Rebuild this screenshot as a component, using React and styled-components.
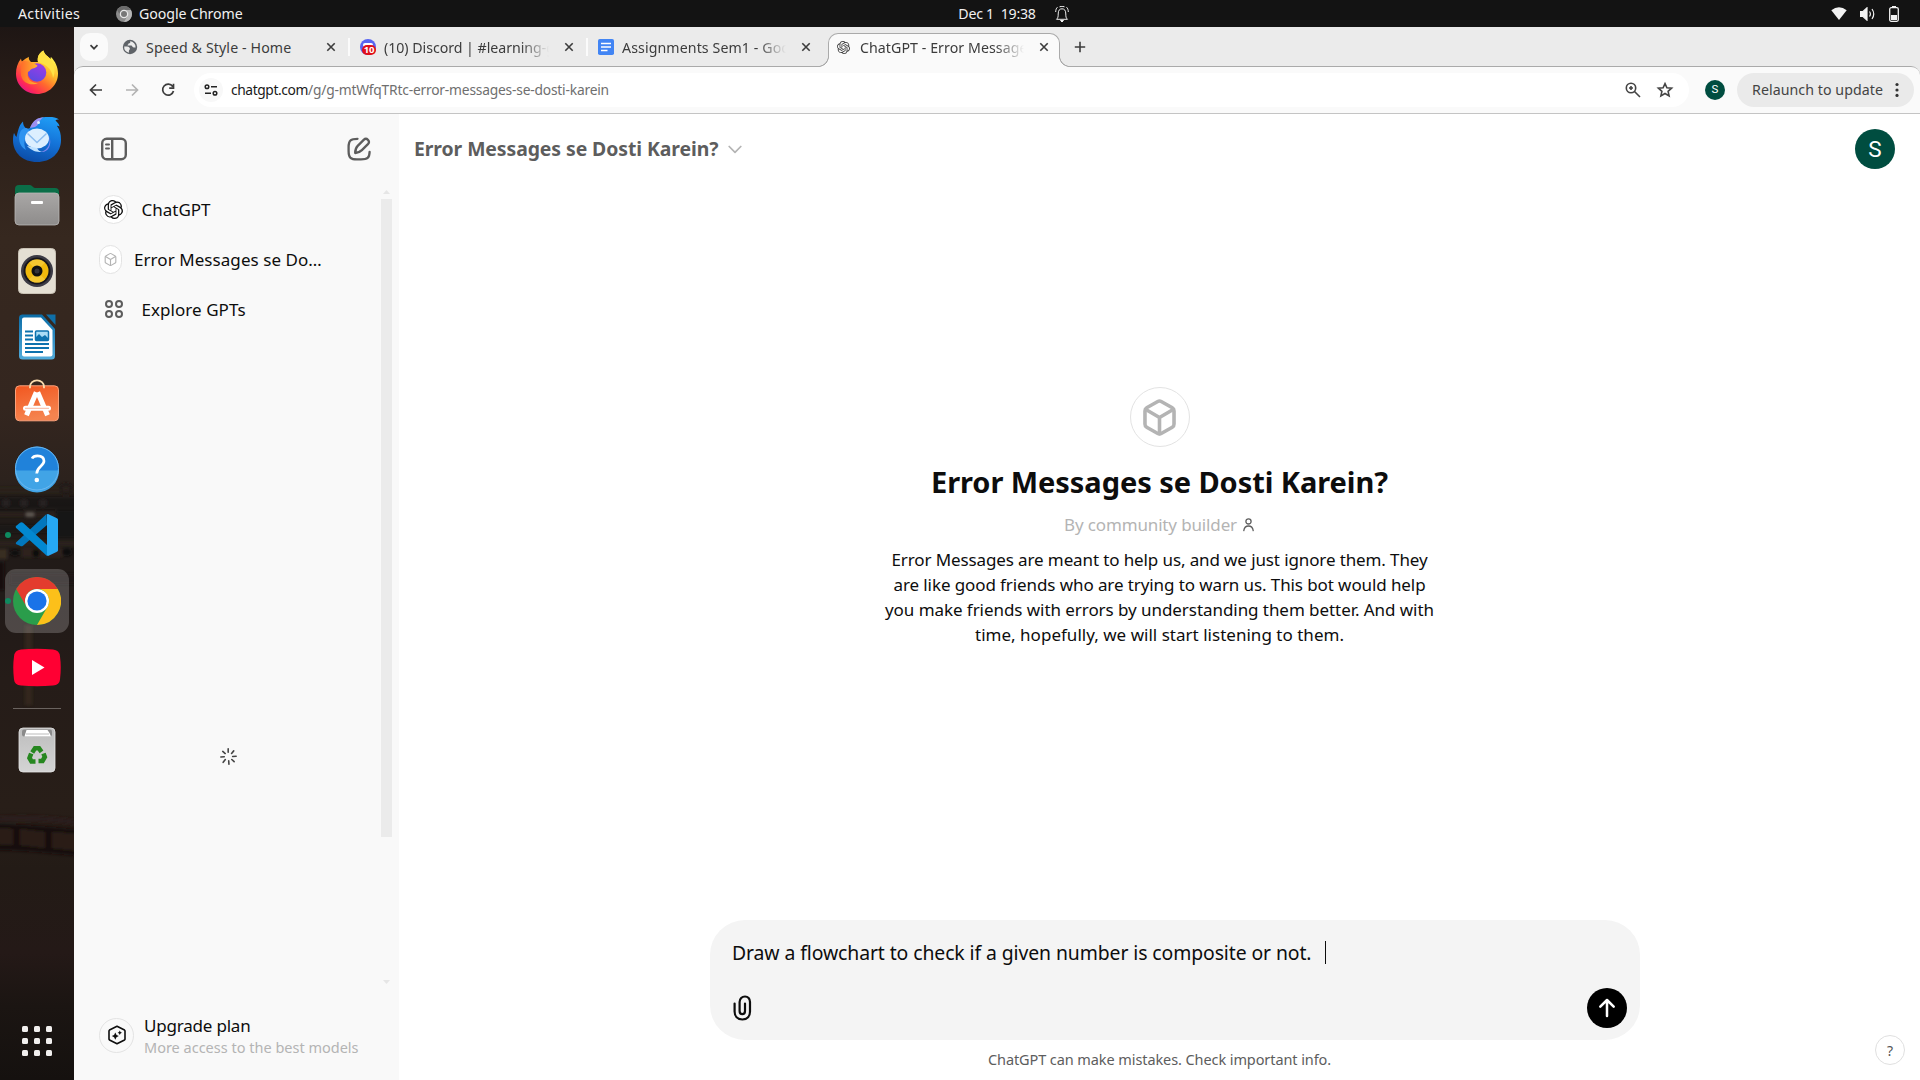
import React from "react";
import styled, { createGlobalStyle, css } from "styled-components";
import { SiOpenai } from "react-icons/si";

const GlobalStyle = createGlobalStyle`
  *, *::before, *::after { box-sizing: border-box; }
  body {
    margin: 0;
    overflow: hidden;
    font-family: "Noto Sans", "Open Sans", sans-serif;
    background: #fff;
  }
  svg { display: block; flex: none; }
  button { border: 0; padding: 0; margin: 0; background: none; font: inherit; color: inherit; }
  h1, h2, p { margin: 0; }
`;

/* ---------- desktop shell ---------- */

const Desktop = styled.div`
  width: 1920px;
  height: 1080px;
  display: flex;
  flex-direction: column;
  overflow: hidden;
`;

const TopBar = styled.header`
  flex: none;
  height: 27px;
  display: grid;
  grid-template-columns: 1fr auto 1fr;
  background: #131313;
  color: #f0f0f0;
  font-size: 14.2px;
  line-height: 27px;
  white-space: nowrap;
`;

const TopGroup = styled.div`
  display: flex;
  align-items: center;
  justify-content: ${(p) => (p.$end ? "flex-end" : "flex-start")};
  padding: ${(p) => p.$pad || "0"};
  gap: ${(p) => p.$gap || 0}px;
`;

const Spaced = styled.span`
  letter-spacing: ${(p) => p.$track || 0}px;
  white-space: pre;
`;

const Body = styled.div`
  flex: 1;
  min-height: 0;
  display: flex;
`;

/* ---------- dock ---------- */

const DockBar = styled.nav`
  position: relative;
  flex: none;
  width: 74px;
  padding-top: 13px;
  display: flex;
  flex-direction: column;
  align-items: center;
  background: #261d18;
`;

const Wallpaper = styled.svg`
  position: absolute;
  inset: 0;
`;

const DockSlot = styled.div`
  position: relative;
  flex: none;
  width: 64px;
  height: 64px;
  margin: 1px 0;
  display: flex;
  align-items: center;
  justify-content: center;
  border-radius: 11px;
  background: ${(p) => (p.$active ? "rgba(255,255,255,0.2)" : "transparent")};
  ${(p) =>
    p.$running &&
    css`
      &::before {
        content: "";
        position: absolute;
        left: 0;
        top: 29px;
        width: 6px;
        height: 6px;
        border-radius: 50%;
        background: #0e8a5f;
      }
    `}
`;

const DockDivider = styled.div`
  position: relative;
  width: 48px;
  height: 1px;
  margin: 8px 0;
  background: #6a635f;
`;

const AppsGrid = styled.div`
  position: relative;
  margin: auto 0 24px;
  display: grid;
  grid-template-columns: repeat(3, 6px);
  gap: 6px;
`;

const AppsDot = styled.i`
  height: 6px;
  border-radius: 1.5px;
  background: #f1efee;
`;

/* ---------- browser ---------- */

const Browser = styled.div`
  flex: 1;
  min-width: 0;
  display: flex;
  flex-direction: column;
  background: #ebebeb;
`;

const TabStrip = styled.div`
  flex: none;
  height: 39px;
  padding: 6px 0 0 6px;
  display: flex;
  align-items: flex-start;
  color: #3c3c3c;
`;

const TabSearch = styled.button`
  width: 28px;
  height: 28px;
  border-radius: 10px;
  display: grid;
  place-items: center;
  background: #fafafa;
`;

const Tab = styled.div`
  position: relative;
  height: ${(p) => (p.$active ? 34 : 28)}px;
  width: ${(p) => p.$width}px;
  padding: ${(p) => (p.$active ? "0 9px 7px 5px" : p.$divider ? "0 11px 0 0" : "0 13px 0 0")};
  margin-left: ${(p) => p.$before}px;
  display: flex;
  align-items: center;
  gap: 8px;
  font-size: 14.2px;
  ${(p) =>
    p.$active
      ? css`
          background: #fafafa;
          border: 1px solid #aaa;
          border-bottom: 0;
          border-radius: 10px 10px 0 0;
          z-index: 1;
          &::before,
          &::after {
            content: "";
            position: absolute;
            bottom: 0;
            width: 11px;
            height: 11px;
          }
          &::before {
            left: -11px;
            background: radial-gradient(circle at 0 0, #ebebeb 9.6px, #aaa 10.2px, #aaa 10.7px, #fafafa 11.3px);
          }
          &::after {
            right: -11px;
            background: radial-gradient(circle at 100% 0, #ebebeb 9.6px, #aaa 10.2px, #aaa 10.7px, #fafafa 11.3px);
          }
        `
      : ""}
  ${(p) =>
    p.$divider &&
    css`
      border-right: 2px solid #fbfbfb;
      border-image: linear-gradient(transparent 6px, #fbfbfb 6px, #fbfbfb 22px, transparent 22px) 1;
    `}
`;

const TabTitle = styled.span`
  flex: 1;
  min-width: 0;
  overflow: hidden;
  white-space: nowrap;
  line-height: 27px;
  letter-spacing: ${(p) => p.$track}px;
  ${(p) =>
    p.$fade &&
    css`
      mask-image: linear-gradient(to right, #000 calc(100% - 34px), transparent calc(100% - 6px));
    `}
`;

const NewTab = styled.button`
  width: 28px;
  height: 28px;
  margin-left: 6px;
  display: grid;
  place-items: center;
`;

const Toolbar = styled.div`
  flex: none;
  height: 48px;
  padding: 6px 6px 6px 8px;
  display: flex;
  align-items: center;
  background: #fafafa;
  border-top: 1px solid #aaa;
  border-bottom: 1px solid #c4c4c4;
  border-radius: 9px 9px 0 0;
`;

const NavButton = styled.button`
  width: 28px;
  height: 28px;
  margin-right: 8px;
  display: grid;
  place-items: center;
  color: ${(p) => (p.$muted ? "#b3b3b3" : "#3c3c3c")};
`;

const AddressBar = styled.div`
  flex: none;
  width: 1495px;
  height: 34px;
  margin-left: 4px;
  padding: 0 14px 0 5px;
  display: flex;
  align-items: center;
  border-radius: 17px;
  background: #fff;
`;

const SiteInfo = styled.span`
  width: 24px;
  height: 24px;
  border-radius: 50%;
  display: grid;
  place-items: center;
  background: #f8f8f8;
`;

const Url = styled.span`
  flex: 1;
  margin-left: 8px;
  font-size: 13.8px;
  line-height: 32px;
  color: #6f6f6f;
  letter-spacing: -0.2px;
  white-space: nowrap;
`;

const Domain = styled.span`
  color: #1a1a1a;
  letter-spacing: -0.4px;
`;

const AddressActions = styled.span`
  display: flex;
  gap: 12px;
`;

const Avatar = styled.span`
  flex: none;
  width: ${(p) => p.$size}px;
  height: ${(p) => p.$size}px;
  border-radius: 50%;
  display: grid;
  place-items: center;
  background: #004d40;
  color: #fff;
  font-family: Roboto, sans-serif;
  font-size: ${(p) => p.$font}px;
  line-height: 1;
`;

const Relaunch = styled.button`
  flex: none;
  width: 177px;
  height: 34px;
  margin-left: 12px;
  padding: 0 14px 2px 15px;
  display: flex;
  align-items: center;
  justify-content: space-between;
  border-radius: 17px;
  background: #eaeaea;
  color: #444;
  font-size: 14.2px;
  letter-spacing: 0.06px;
`;

/* ---------- page ---------- */

const Page = styled.div`
  flex: 1;
  min-height: 0;
  display: flex;
  background: #fff;
  color: #0d0d0d;
`;

const Sidebar = styled.aside`
  flex: none;
  width: 325px;
  display: flex;
  flex-direction: column;
  background: #f9f9f9;
`;

const SidebarHead = styled.div`
  flex: none;
  height: 70px;
  padding: 0 28px 0 26px;
  display: flex;
  align-items: center;
  justify-content: space-between;
  color: #5d5d5d;
`;

const SidebarScroll = styled.div`
  height: 802px;
  display: flex;
`;

const NavList = styled.div`
  flex: 1;
  padding: 0 0 0 25px;
  display: flex;
  flex-direction: column;
`;

const NavRow = styled.div`
  height: 50px;
  display: flex;
  align-items: center;
  gap: ${(p) => p.$gap || 13.5}px;
  font-size: 17px;
  white-space: nowrap;
`;

const NavLabel = styled.span`
  letter-spacing: ${(p) => p.$track || 0}px;
`;

const IconDisc = styled.span`
  flex: none;
  width: ${(p) => p.$w}px;
  height: ${(p) => p.$h}px;
  display: grid;
  place-items: center;
  border-radius: 50px;
  border: ${(p) => (p.$bare ? "0" : "1px solid #e3e3e3")};
  background: ${(p) => (p.$bare || p.$clear ? "transparent" : "#fff")};
  color: ${(p) => p.$color || "#0d0d0d"};
`;

const Loading = styled.div`
  margin: 414px 0 0 121px;
`;

const ScrollTrack = styled.div`
  width: 11px;
  margin-right: 7px;
  padding: 6px 0 2px;
  display: flex;
  flex-direction: column;
  align-items: center;
`;

const ScrollThumb = styled.div`
  width: 11px;
  height: 638px;
  margin: 5px 0 auto;
  background: #ebebeb;
`;

const Upgrade = styled.div`
  margin-top: 24px;
  padding-left: 25px;
  height: 50px;
  display: flex;
  align-items: center;
  gap: 10px;
`;

const UpgradeText = styled.div`
  display: flex;
  flex-direction: column;
  white-space: nowrap;
`;

const UpgradeTitle = styled.span`
  font-size: 17px;
  line-height: 24px;
  letter-spacing: -0.2px;
`;

const UpgradeNote = styled.span`
  font-size: 14.5px;
  line-height: 19px;
  color: #b4b4b4;
`;

const Main = styled.main`
  flex: 1;
  min-width: 0;
  display: flex;
  flex-direction: column;
`;

const ChatHeader = styled.div`
  flex: none;
  height: 70px;
  padding: 0 25px 0 15px;
  display: flex;
  align-items: center;
  justify-content: space-between;
`;

const ModelName = styled.h2`
  display: flex;
  align-items: center;
  gap: 10px;
  padding-bottom: 2px;
  font-size: 19.4px;
  font-weight: 700;
  letter-spacing: -0.08px;
  color: #5d5d5d;
`;

const Chevron = styled.svg`
  margin-top: 3px;
`;

const Hero = styled.section`
  flex: 1;
  padding-top: 203px;
  display: flex;
  flex-direction: column;
  align-items: center;
`;

const HeroTitle = styled.h1`
  margin-top: 15px;
  font-size: 29px;
  line-height: 40px;
  font-weight: 700;
  letter-spacing: -0.06px;
`;

const Byline = styled.div`
  margin-top: 10px;
  height: 25px;
  display: flex;
  align-items: center;
  gap: 5px;
  font-size: 17px;
  letter-spacing: -0.14px;
  color: #b4b4b4;
`;

const Blurb = styled.p`
  margin-top: 10px;
  width: 560px;
  text-align: center;
  font-size: 17px;
  line-height: 25px;
`;

const BlurbLine = styled.span`
  display: block;
  white-space: nowrap;
  letter-spacing: ${(p) => p.$track}px;
`;

const Composer = styled.div`
  flex: none;
  width: 930px;
  height: 120px;
  margin-left: 311px;
  padding: 16px 13px 12px 22px;
  display: flex;
  flex-direction: column;
  justify-content: space-between;
  border-radius: 35px;
  background: #f4f4f4;
`;

const Prompt = styled.div`
  display: flex;
  align-items: center;
  gap: 13.5px;
  height: 32px;
  font-size: 19.4px;
  letter-spacing: -0.095px;
`;

const Caret = styled.i`
  width: 1px;
  height: 23px;
  background: #0d0d0d;
`;

const ComposerActions = styled.div`
  display: flex;
  align-items: center;
  justify-content: space-between;
  padding-left: 1px;
`;

const SendButton = styled.button`
  width: 40px;
  height: 40px;
  border-radius: 50%;
  display: grid;
  place-items: center;
  background: #000;
`;

const Footer = styled.footer`
  flex: none;
  height: 40px;
  padding: 0 15px 2px 0;
  display: grid;
  grid-template-columns: 45px 1fr 30px;
  align-items: center;
`;

const Disclaimer = styled.span`
  grid-column: 2;
  text-align: center;
  font-size: 14.5px;
  letter-spacing: -0.09px;
  color: #5d5d5d;
`;

const HelpButton = styled.button`
  align-self: start;
  margin-top: -5px;
  width: 30px;
  height: 30px;
  border: 1px solid #e0e0e0;
  border-radius: 50%;
  background: #fff;
  color: #555;
  font-size: 14px;
`;

/* ---------- dock artwork ---------- */

const DockWallpaper = () => (
  <Wallpaper width="74" height="1053" viewBox="0 27 74 1053">
    <defs>
      <linearGradient id="wall" x1="0" y1="27" x2="0" y2="1080" gradientUnits="userSpaceOnUse">
        <stop offset="0" stopColor="#1e1614" />
        <stop offset="0.05" stopColor="#281c17" />
        <stop offset="0.2" stopColor="#36281f" />
        <stop offset="0.36" stopColor="#34261f" />
        <stop offset="0.43" stopColor="#2c221d" />
        <stop offset="0.455" stopColor="#211b18" />
        <stop offset="0.55" stopColor="#211a18" />
        <stop offset="0.62" stopColor="#251c18" />
        <stop offset="0.74" stopColor="#281e18" />
        <stop offset="0.8" stopColor="#231b16" />
        <stop offset="0.88" stopColor="#241917" />
        <stop offset="0.93" stopColor="#1b1512" />
        <stop offset="1" stopColor="#15110f" />
      </linearGradient>
      <filter id="soft" x="-20%" y="-20%" width="140%" height="140%">
        <feGaussianBlur stdDeviation="1.5" />
      </filter>
    </defs>
    <rect y="27" width="74" height="1053" fill="url(#wall)" />
    <g filter="url(#soft)">
      <rect x="-5" y="488" width="84" height="4" fill="#2b201b" />
      <rect x="-5" y="497" width="84" height="12" fill="#131112" opacity="0.6" />
      <circle cx="66" cy="489" r="5" fill="none" stroke="#1b1513" strokeWidth="2" />
      <circle cx="6" cy="503" r="4" fill="#282020" />
      <circle cx="24" cy="503" r="4" fill="#282020" />
      <circle cx="43" cy="503" r="4" fill="#282020" />
      <rect x="-5" y="513" width="60" height="3" fill="#2e231e" />
      <rect x="56" y="510" width="22" height="28" fill="#161413" />
      <rect x="26" y="512" width="8" height="5" fill="#5d5751" />
      <rect x="-5" y="525" width="60" height="8" fill="#141112" opacity="0.5" />
      <rect x="-5" y="541" width="84" height="5" fill="#2b201c" />
      <rect x="-5" y="549" width="12" height="10" fill="#382d20" />
      <rect x="22" y="548" width="40" height="9" fill="#2e241e" />
      <ellipse cx="15" cy="553" rx="5" ry="3" fill="#110e0e" />
      <ellipse cx="36" cy="553" rx="4" ry="4" fill="#110e0e" />
      <ellipse cx="67" cy="552" rx="5" ry="4" fill="#110e0e" />
      <rect x="-5" y="562" width="9" height="28" fill="#121011" />
      <rect x="10" y="574" width="70" height="10" fill="#1a1415" />
      <rect x="25" y="625" width="7" height="80" fill="#443421" opacity="0.45" />
      <path d="M-4 819 C25 817 50 818 80 823" stroke="#2b1f1d" strokeWidth="5" fill="none" />
      <path d="M-4 837 C25 837 50 840 80 843" stroke="#151010" strokeWidth="26" fill="none" />
      <path d="M-4 828 L13 829 L13 845 L-4 844Z M20 829 L45 832 L45 848 L20 845Z M52 832 L80 834 L80 851 L52 848Z" fill="#291f19" />
    </g>
  </Wallpaper>
);

const Firefox = () => (
  <svg width="48" height="48" viewBox="0 0 48 48">
    <defs>
      <linearGradient id="ff1" x1="0.85" y1="0.1" x2="0.2" y2="0.95">
        <stop offset="0.05" stopColor="#fff44f" />
        <stop offset="0.35" stopColor="#ffb62a" />
        <stop offset="0.6" stopColor="#ff6a2e" />
        <stop offset="0.85" stopColor="#ff2a55" />
        <stop offset="1" stopColor="#e31587" />
      </linearGradient>
      <linearGradient id="ff2" x1="0.8" y1="0" x2="0.3" y2="1">
        <stop offset="0" stopColor="#a03be8" />
        <stop offset="1" stopColor="#5b4ae0" />
      </linearGradient>
      <linearGradient id="ff3" x1="0" y1="0" x2="1" y2="0">
        <stop offset="0" stopColor="#ff6a2a" />
        <stop offset="1" stopColor="#ffb82e" />
      </linearGradient>
    </defs>
    <path d="M30.4 1.5c1 4 4.2 5.5 7.2 8.700C37.500 9 37.700 8.500 38 8c4.500 4.500 7 10.500 7 16.500C45 36 35.800 45 24 45S3 36 3 24.800C3 19 4.500 14 8 9.500c.2 1.500.5 2.300 1 3C12 10 14 9 15.700 7.800c0 3 1 4 2.300 5.200h7c-1-5 1-9 5.400-11.500z" fill="url(#ff1)" />
    <path d="M25 13c-1-5 1-9 5.400-11.500 1 4 4.200 5.500 7.200 8.700C43 17 42 25 40 29c-1-9-6-13-15-16z" fill="#ffe245" />
    <circle cx="24" cy="23.500" r="9.300" fill="url(#ff2)" />
    <path d="M9 12.500c4-1 8 0 9.500 1.500 2.500.5 4.500 1.200 6 2.700-1 2.300-4.500 2.300-6 3.300-1.500 1-2 2.500-3.500 2.800-2 6 3 12 10 11.200-6 3-15 1-17-7.500-.6-5-.5-10 1-14z" fill="url(#ff3)" />
  </svg>
);

const Thunderbird = () => (
  <svg width="48" height="48" viewBox="0 -1 48 48">
    <defs>
      <linearGradient id="tb" x1="0.7" y1="0" x2="0.4" y2="1">
        <stop offset="0" stopColor="#1f9cf5" />
        <stop offset="0.5" stopColor="#1473d8" />
        <stop offset="1" stopColor="#0c4da8" />
      </linearGradient>
    </defs>
    <path d="M17 12C20 4 27 .5 34 1c4-.3 9 0 12 2.500-2 0-3 .3-3.500 1C45 7 46 8 46.500 10.500 45 9.500 44.500 9.500 44 10c3 4 4 8 4 14 0 13-10 22-24 22S0 37 0 24c0-3 .3-5 1-7 1 2 1.500 3 2.500 4C5 15 6 9 10 5.500 10 9 11 11 14 13z" fill="url(#tb)" />
    <path d="M17 12C20 4 25 1.500 31 1.300 25 4 27 9 22 11z" fill="#9d8ff0" />
    <path d="M6 22c0-5 2-9 6-10 3 0 5 2 5 5-6 4-7 10-4 17-4-2-7-7-7-12z" fill="#2d93f0" />
    <path d="M36 19c2 9-1 15-8 17 6 1 12-6 8-17z" fill="#7f86ee" />
    <ellipse cx="24" cy="22.500" rx="12" ry="10" fill="#dcefff" />
    <path d="M14 30c5 5 9 6 15 6-3-1-4-2-5-4z" fill="#bfe2ff" />
    <path d="M14.500 17.500 24 26.500l9.500-9" fill="none" stroke="#8cbdf0" strokeWidth="1.500" />
    <circle cx="25.500" cy="6.500" r="1.500" fill="#d8ecff" />
  </svg>
);

const Files = () => (
  <svg width="48" height="48" viewBox="0 0 48 48">
    <defs>
      <linearGradient id="fl" x1="0" y1="0" x2="0" y2="1">
        <stop offset="0" stopColor="#a9a7a6" />
        <stop offset="1" stopColor="#8e8c8b" />
      </linearGradient>
    </defs>
    <path d="M2 8a4 4 0 0 1 4-4h11c2 0 3 3 5 3h20a4 4 0 0 1 4 4v12H2z" fill="#0b6e48" />
    <rect x="2" y="12" width="44" height="32" rx="4" fill="url(#fl)" stroke="#b9b7b6" strokeWidth="0.800" />
    <rect x="18" y="20" width="12" height="3" rx="1" fill="#fff" />
  </svg>
);

const Rhythmbox = () => (
  <svg width="48" height="48" viewBox="0 0 48 48">
    <rect x="5.500" y="1.500" width="37" height="45" rx="4" fill="#e4dfd3" stroke="#c9c2b5" />
    <circle cx="24" cy="24" r="16" fill="#3c3b45" />
    <circle cx="24" cy="24" r="13.500" fill="#17161c" />
    <circle cx="24" cy="24" r="11.500" fill="#f0b90c" />
    <path d="M24 24 16 15.500a11.500 11.500 0 0 1 16 0zM24 24l8 8.500a11.500 11.500 0 0 1-16 0z" fill="#f9d04a" opacity="0.600" />
    <circle cx="24" cy="24" r="5.500" fill="#111" />
    <circle cx="24" cy="24" r="2.500" fill="#33323a" />
  </svg>
);

const Writer = () => (
  <svg width="48" height="48" viewBox="0 0 48 48">
    <defs>
      <linearGradient id="wr" x1="0" y1="0" x2="0" y2="1">
        <stop offset="0" stopColor="#0b6ca6" />
        <stop offset="1" stopColor="#52acdb" />
      </linearGradient>
    </defs>
    <path d="M9 1.500h20L42 16v27a3.500 3.500 0 0 1-3.500 3.500h-29A3.500 3.500 0 0 1 6 43V5a3.500 3.500 0 0 1 3-3.500z" fill="url(#wr)" />
    <path d="M11 4.500h17L39.500 17v24.500a2 2 0 0 1-2 2H11a2 2 0 0 1-2-2v-35a2 2 0 0 1 2-2z" fill="#fff" />
    <path d="M33 1.500h9.500V12z" fill="#0f6fa8" />
    <path d="M12 18.500h8M12 22.500h8M12 26.500h8M12 31h24M12 35h24M12 39h18" stroke="#0d72ae" strokeWidth="1.800" />
    <rect x="22.500" y="18" width="13" height="9.500" rx="1" fill="#a9dcf5" stroke="#0d72ae" strokeWidth="1.500" />
    <path d="M23 27v-3l3-3 3 3 3-2 3 3v2z" fill="#0d72ae" />
  </svg>
);

const Software = () => (
  <svg width="48" height="48" viewBox="0 0.7 48 48">
    <defs>
      <linearGradient id="sw" x1="0" y1="0" x2="0.3" y2="1">
        <stop offset="0" stopColor="#f2561f" />
        <stop offset="1" stopColor="#f5844f" />
      </linearGradient>
    </defs>
    <rect x="2.500" y="7.500" width="43" height="35" rx="4" fill="url(#sw)" stroke="#f9a27c" />
    <path d="M17 10V8.500a7 6.500 0 0 1 14 0V10" fill="none" stroke="#fbdcae" strokeWidth="1.800" />
    <path d="M23.300 14 13.500 37M24.700 14l9.800 23" stroke="#fff" strokeWidth="5" />
    <rect x="10" y="27.500" width="28" height="5" rx="2.500" fill="#fff" />
    <path d="M12 30h24" stroke="#f6a284" strokeWidth="0.800" />
  </svg>
);

const Help = () => (
  <svg width="48" height="48" viewBox="0 0.5 48 48">
    <circle cx="24" cy="24" r="22" fill="#2082da" />
    <path d="M2 26a22 22 0 0 0 44 0z" fill="#41a4e6" />
    <circle cx="24" cy="24" r="21.500" fill="none" stroke="#6bb8f0" />
    <path d="M19 14c1-2 3-2.700 5.500-2.700 4 0 6.500 2 6.500 5.300 0 5-7.300 5.500-7.300 12.400" fill="none" stroke="#fff" strokeWidth="2.700" />
    <circle cx="23.800" cy="35.500" r="2.300" fill="#fff" />
  </svg>
);

const VsCode = () => (
  <svg width="48" height="48" viewBox="0 0 48 48">
    <path d="M3 31.500 33.500 3 34 14 10 34.700c-1 .8-2 .8-3 0L3.300 33.200c-.6-.6-.6-1.200-.3-1.700z" fill="#0277bd" />
    <path d="M3 15 7 11.800c1-.7 2-.7 3 0L34 34v11L3.200 17c-.6-.6-.6-1.400-.2-2z" fill="#0288d1" />
    <path d="M34 3.300 35 3l8.500 4c1 .5 1.500 1 1.500 2v30c0 1-.5 1.500-1.500 2L35 45l-1-.5z" fill="#26a8f3" />
  </svg>
);

const Chrome = () => (
  <svg width="48" height="48" viewBox="0 0 48 48">
    <circle cx="24" cy="24" r="24" fill="#2a9d4b" />
    <path d="M3.200 12A24 24 0 0 1 44.800 12H24a12 12 0 0 0-10.400 18z" fill="#e33b2e" />
    <path d="M44.800 12A24 24 0 0 1 24 48l10.400-18A12 12 0 0 0 24 12z" fill="#fcc01a" />
    <circle cx="24" cy="24" r="12" fill="#fff" />
    <circle cx="24" cy="24" r="9.600" fill="#1a73e8" />
  </svg>
);

const YouTube = () => (
  <svg width="48" height="48" viewBox="0 0 48 48">
    <path d="M8 6.500q16-1.500 32 0 6.500.5 7 7 1.500 10.500 0 23-.5 5.500-7 6-16 1.500-32 0-6.500-.5-7-6-1.500-12.500 0-23 .5-6.500 7-7z" fill="#ff0033" />
    <path d="M19 17v15l12.500-7.500z" fill="#fff" />
  </svg>
);

const Trash = () => (
  <svg width="48" height="48" viewBox="0 0 48 48">
    <defs>
      <linearGradient id="tr" x1="0" y1="0" x2="0" y2="1">
        <stop offset="0" stopColor="#bdbdbd" />
        <stop offset="1" stopColor="#d4d4d4" />
      </linearGradient>
    </defs>
    <rect x="6" y="2" width="36" height="44" rx="4" fill="url(#tr)" stroke="#e5e5e5" strokeWidth="0.800" />
    <rect x="9" y="3.500" width="30" height="7" rx="2" fill="#8a8a8a" />
    <path d="M11.500 10.500 13.500 4h21l2 3 1.500 3.500z" fill="#fff" />
    <path d="M13 8h23" stroke="#bbb" />
    <g fill="none" stroke="#26871f" strokeWidth="4.600">
      <path d="M19.200 26.500 22 22.300h4l2.500 3.500" />
      <path d="M30.500 27.500 31.800 31 29.500 35h-4" />
      <path d="M22.500 35.500h-4L16.500 32l1.700-4.500" />
    </g>
  </svg>
);

/* ---------- small icons ---------- */

const Line = ({ w, box = 24, sw = 2, cap = "round", children }) => (
  <svg width={w} height={w} viewBox={`0 0 ${box} ${box}`} fill="none" stroke="currentColor" strokeWidth={sw} strokeLinecap={cap} strokeLinejoin={cap === "butt" ? "miter" : "round"}>
    {children}
  </svg>
);

const ChromeMono = () => (
  <svg width="16" height="16" viewBox="0 0 16 16">
    <circle cx="8" cy="8" r="8" fill="#8b8b8b" />
    <path d="M1.100 4A8 8 0 0 1 14.900 4H8a4 4 0 0 0-3.500 6z" fill="#6c6c6c" />
    <path d="M14.900 4A8 8 0 0 1 8 16l3.500-6A4 4 0 0 0 8 4z" fill="#b5b5b5" />
    <circle cx="8" cy="8" r="4.300" fill="#e8e8e8" />
    <circle cx="8" cy="8" r="3" fill="#777" />
  </svg>
);

const BellIcon = () => (
  <svg width="16" height="16" viewBox="0 0 16 16" fill="none" stroke="#f0f0f0" strokeWidth="1">
    <path d="M2.500 13.300c1.500-1.300 1.700-2.500 1.700-5.300 0-3.500 1.300-5.200 3.800-5.200s3.800 1.700 3.800 5.200c0 2.800.2 4 1.700 5.300z" />
    <path d="M6.500 14.500h3L8 16z" fill="#f0f0f0" />
    <path d="M3.500 1.200C2.200 2.300 1.700 4 1.700 6M12.500 1.200c1.300 1.100 1.800 2.800 1.800 4.800M5.500.8Q8-.3 10.500.8" />
  </svg>
);

const WifiIcon = () => (
  <svg width="16" height="14" viewBox="0 0 16 14">
    <path d="M.3 3.300Q8-2.600 15.700 3.300L8 13z" fill="#f2f2f2" />
  </svg>
);

const VolumeIcon = () => (
  <svg width="16" height="14" viewBox="0 0 16 14" fill="none" stroke="#f2f2f2" strokeWidth="1.200">
    <path d="M.5 4.500H3L7 .8v12.400L3 9.500H.5z" fill="#f2f2f2" />
    <path d="M9.500 4.500q1.800 2.500 0 5M12 2q3.500 5 0 10" />
  </svg>
);

const BatteryIcon = () => (
  <svg width="10" height="16" viewBox="0 0 10 16">
    <rect x="3" y="0" width="4" height="2" fill="#f2f2f2" />
    <rect x="0.700" y="1.700" width="8.600" height="13.600" rx="1.500" fill="none" stroke="#f2f2f2" strokeWidth="1.300" />
    <rect x="2" y="9" width="6" height="5" fill="#f2f2f2" />
  </svg>
);

const GlobeIcon = () => (
  <svg width="16" height="16" viewBox="0 0 16 16">
    <circle cx="8" cy="8" r="7.200" fill="#5f6368" />
    <path d="M2.200 7.600c2.300 0 5.300-.3 5.700 2 .2 1.300-1 1.300-1 2.400v1.700A5.800 5.800 0 0 1 2.200 7.600zM8 2.300c.8 1.500-.2 2.200-1.500 2.200 0 1.300-1 1-1 2h3.200c2 0 1.300 1.800 3 2h1.900A5.800 5.800 0 0 0 8 2.300z" fill="#ebebeb" />
  </svg>
);

const DiscordBadgeBox = styled.span`
  position: relative;
  flex: none;
  width: 16px;
  height: 16px;
  border-radius: 50%;
  background: #5865f2;
`;

const DiscordGlyph = styled.i`
  position: absolute;
  left: 3px;
  top: 4px;
  width: 10px;
  height: 4px;
  border-radius: 3px;
  background: #fff;
`;

const DiscordCount = styled.b`
  position: absolute;
  left: 2px;
  top: 6px;
  width: 14px;
  height: 10px;
  border-radius: 5px;
  background: #e0101a;
  color: #fff;
  font-size: 9.5px;
  line-height: 10px;
  text-align: center;
  letter-spacing: -0.3px;
`;

const DocsIcon = () => (
  <svg width="16" height="16" viewBox="0 0 16 16">
    <rect width="16" height="16" rx="1.800" fill="#4285f4" />
    <path d="M3 4.500h10M3 8h10M3 11.500h6.500" stroke="#fff" strokeWidth="1.600" />
  </svg>
);

const CloseIcon = () => (
  <Line w={12} box={12} sw={1.6} cap="butt">
    <path d="M2.300 2.300l7.400 7.400M9.700 2.300 2.300 9.700" />
  </Line>
);

const CubeIcon = ({ w, sw }) => (
  <Line w={w} sw={sw}>
    <path d="M11 2.600 4.500 6.300a2 2 0 0 0-1 1.800v7.800a2 2 0 0 0 1 1.800L11 21.400a2 2 0 0 0 2 0l6.500-3.700a2 2 0 0 0 1-1.800V8.100a2 2 0 0 0-1-1.800L13 2.600a2 2 0 0 0-2 0z" />
    <path d="M4 7.300l8 4.700 8-4.700M12 12v9.500" />
  </Line>
);

const SidebarIcon = () => (
  <svg width="28" height="24" viewBox="0 0 28 24" fill="none" stroke="currentColor" strokeWidth="2.400">
    <rect x="2.200" y="1.700" width="23.600" height="20.600" rx="4.500" />
    <path d="M12.200 1.700v20.600" />
    <path d="M6 7.500h3M6 11.500h3" strokeWidth="2" strokeLinecap="round" />
  </svg>
);

const EditIcon = () => (
  <svg width="24" height="24" viewBox="0 0 24 24" fill="none" stroke="currentColor" strokeWidth="2.300" strokeLinecap="round" strokeLinejoin="round">
    <path d="M10.500 1.800C4 1.800 1.600 3 1.600 10v4c0 7 2.400 8.400 8.400 8.400h4c6.500 0 8.400-1.400 8.600-7.400" />
    <path d="M8.200 16c0-3.500.6-5.200 2.500-7.100l6-6c2.900-2.800 7 1.200 4.200 4.200l-6 6c-1.900 1.900-3.200 2.700-6.700 2.900z" />
  </svg>
);

const DotsGridIcon = () => (
  <Line w={20} box={20} sw={2}>
    <circle cx="5" cy="5" r="3" />
    <circle cx="15" cy="5" r="3" />
    <circle cx="5" cy="15" r="3" />
    <circle cx="15" cy="15" r="3" />
  </Line>
);

const Spinner = () => (
  <svg width="17" height="17" viewBox="0 0 16 16" fill="none" stroke="#444" strokeWidth="1.500" strokeLinecap="round">
    <path d="M7.700.8V4M12.900 2.700l-2 2.400M15.200 7.800l-3.300.2M13.300 12.800l-2.200-2M8.400 15.200 8.200 12M3 13.500l2-2.600M.8 8.400 4 8.200M2.600 3.200l2.300 2" />
  </svg>
);

const UpgradeIcon = () => (
  <svg width="18" height="20" viewBox="0 0 18 20">
    <path d="M9 1.300 16.500 5q.5.400.5 1v8q0 .6-.5 1L9 18.700 1.500 15Q1 14.600 1 14V6q0-.6.500-1z" fill="none" stroke="#0d0d0d" strokeWidth="1.600" strokeLinejoin="round" />
    <path d="M7.300 7.500q.6 3 3.500 3.600-2.900.7-3.500 3.600-.6-2.900-3.500-3.600 2.900-.6 3.500-3.600zM11.800 5.500q.3 1.800 2.200 2.200-1.900.4-2.200 2.200-.4-1.800-2.200-2.200 1.800-.4 2.200-2.200z" fill="#0d0d0d" />
  </svg>
);

const ClipIcon = () => (
  <svg width="19" height="26" viewBox="0 0 19 26" fill="none" stroke="#0d0d0d" strokeWidth="2.200" strokeLinecap="round">
    <path d="M1.600 8.500v8c0 4.700 3 8 7.800 8s7.600-3.300 7.600-8V7c0-3.300-2-5.500-5-5.500S6.600 3.700 6.600 7v9c0 2 1 3.200 2.700 3.200S12 18 12 16V8.500" />
  </svg>
);

/* ---------- app ---------- */

const dockApps = [
  { Icon: Firefox },
  { Icon: Thunderbird },
  { Icon: Files },
  { Icon: Rhythmbox },
  { Icon: Writer },
  { Icon: Software },
  { Icon: Help },
  { Icon: VsCode, running: true },
  { Icon: Chrome, running: true, active: true },
  { Icon: YouTube },
];

const blurb = [
  ["Error Messages are meant to help us, and we just ignore them. They", -0.116],
  ["are like good friends who are trying to warn us. This bot would help", -0.097],
  ["you make friends with errors by understanding them better. And with", -0.059],
  ["time, hopefully, we will start listening to them.", 0.019],
];

const Dock = () => (
  <DockBar>
    <DockWallpaper />
    {dockApps.map(({ Icon, running, active }, i) => (
      <DockSlot key={i} $running={running} $active={active}>
        <Icon />
      </DockSlot>
    ))}
    <DockDivider />
    <DockSlot>
      <Trash />
    </DockSlot>
    <AppsGrid>
      {Array.from({ length: 9 }, (_, i) => (
        <AppsDot key={i} />
      ))}
    </AppsGrid>
  </DockBar>
);

const Tabs = () => (
  <TabStrip>
    <TabSearch>
      <Line w={10} box={10} sw={1.7} cap="butt">
        <path d="M1.500 3.200 5 6.700l3.500-3.500" />
      </Line>
    </TabSearch>
    <Tab $before={14} $width={228} $divider>
      <GlobeIcon />
      <TabTitle $track={0.11}>Speed &amp; Style - Home</TabTitle>
      <CloseIcon />
    </Tab>
    <Tab $before={10} $width={228} $divider>
      <DiscordBadgeBox>
        <DiscordGlyph />
        <DiscordCount>10</DiscordCount>
      </DiscordBadgeBox>
      <TabTitle $fade $track={-0.04}>(10) Discord | #learning-g</TabTitle>
      <CloseIcon />
    </Tab>
    <Tab $before={10} $width={227}>
      <DocsIcon />
      <TabTitle $fade $track={0.09}>Assignments Sem1 - Goo</TabTitle>
      <CloseIcon />
    </Tab>
    <Tab $before={3} $width={232} $active>
      <IconDisc $w={18} $h={16} $bare $color="#3c3c3c">
        <SiOpenai size={13} />
      </IconDisc>
      <TabTitle $fade $track={0.06}>ChatGPT - Error Message</TabTitle>
      <CloseIcon />
    </Tab>
    <NewTab>
      <Line w={12} box={12} sw={1.6} cap="butt">
        <path d="M6 .8v10.400M.8 6h10.400" />
      </Line>
    </NewTab>
  </TabStrip>
);

const BrowserToolbar = () => (
  <Toolbar>
    <NavButton>
      <Line w={14} box={14} sw={1.7} cap="butt">
        <path d="M13 7H1.800M7 1.500 1.500 7 7 12.500" />
      </Line>
    </NavButton>
    <NavButton $muted>
      <Line w={14} box={14} sw={1.7} cap="butt">
        <path d="M1 7h11.200M7 1.500 12.500 7 7 12.500" />
      </Line>
    </NavButton>
    <NavButton>
      <Line w={14} box={14} sw={1.7} cap="butt">
        <path d="M11.700 3.500A5.500 5.500 0 1 0 12.500 8M12.500.8v4.300H8.200" />
      </Line>
    </NavButton>
    <AddressBar>
      <SiteInfo>
        <svg width="14" height="12" viewBox="0 0 14 12" fill="none" stroke="#222" strokeWidth="1.500">
          <circle cx="3" cy="2.800" r="1.800" />
          <circle cx="11" cy="9.200" r="1.800" />
          <path d="M7 2.800h6M1 9.200h6" />
        </svg>
      </SiteInfo>
      <Url>
        <Domain>chatgpt.com</Domain>/g/g-mtWfqTRtc-error-messages-se-dosti-karein
      </Url>
      <AddressActions>
        <svg width="20" height="20" viewBox="0 0 20 20" fill="none" stroke="#444" strokeWidth="1.600">
          <circle cx="8" cy="8" r="4.700" />
          <path d="M11.500 11.500 17 17M8 6v4M6 8h4" />
        </svg>
        <svg width="20" height="20" viewBox="0 0 20 20" fill="none" stroke="#444" strokeWidth="1.600">
          <path d="M10 3.600l1.900 4.200 4.700.4-3.500 3.100 1 4.600L10 13.500l-4.100 2.400 1-4.600-3.500-3.100 4.700-.4z" />
        </svg>
      </AddressActions>
    </AddressBar>
    <TopGroup $pad="0 0 0 16px">
      <Avatar $size={20} $font={11.5}>S</Avatar>
    </TopGroup>
    <Relaunch>
      Relaunch to update
      <svg width="6" height="16" viewBox="0 0 6 16" fill="#333">
        <circle cx="3" cy="3.500" r="1.600" />
        <circle cx="3" cy="9" r="1.600" />
        <circle cx="3" cy="14.400" r="1.600" />
      </svg>
    </Relaunch>
  </Toolbar>
);

export default function App() {
  return (
    <Desktop>
      <GlobalStyle />
      <TopBar>
        <TopGroup $pad="0 0 0 18px" $gap={36}>
          <Spaced $track={0.29}>Activities</Spaced>
          <TopGroup $gap={7}>
            <ChromeMono />
            <Spaced $track={-0.08}>Google Chrome</Spaced>
          </TopGroup>
        </TopGroup>
        <TopGroup $pad="0 0 0 108px" $gap={18}>
          <Spaced $track={-0.28}>Dec 1{"  "}19:38</Spaced>
          <BellIcon />
        </TopGroup>
        <TopGroup $end $gap={13} $pad="0 21px 0 0">
          <WifiIcon />
          <VolumeIcon />
          <BatteryIcon />
        </TopGroup>
      </TopBar>
      <Body>
        <Dock />
        <Browser>
          <Tabs />
          <BrowserToolbar />
          <Page>
            <Sidebar>
              <SidebarHead>
                <SidebarIcon />
                <EditIcon />
              </SidebarHead>
              <SidebarScroll>
                <NavList>
                  <NavRow>
                    <IconDisc $w={29} $h={29}>
                      <SiOpenai size={19} />
                    </IconDisc>
                    <NavLabel>ChatGPT</NavLabel>
                  </NavRow>
                  <NavRow $gap={12}>
                    <IconDisc $w={23} $h={29} $color="#b4b4b4">
                      <CubeIcon w={15} sw={1.8} />
                    </IconDisc>
                    <NavLabel $track={0.06}>Error Messages se Do…</NavLabel>
                  </NavRow>
                  <NavRow>
                    <IconDisc $w={29} $h={29} $bare $color="#5d5d5d">
                      <DotsGridIcon />
                    </IconDisc>
                    <NavLabel $track={0.05}>Explore GPTs</NavLabel>
                  </NavRow>
                  <Loading>
                    <Spinner />
                  </Loading>
                </NavList>
                <ScrollTrack>
                  <svg width="7" height="4" viewBox="0 0 7 4">
                    <path d="M3.500 0 7 4H0z" fill="#e6e6e6" />
                  </svg>
                  <ScrollThumb />
                  <svg width="7" height="4" viewBox="0 0 7 4">
                    <path d="M3.500 4 7 0H0z" fill="#e6e6e6" />
                  </svg>
                </ScrollTrack>
              </SidebarScroll>
              <Upgrade>
                <IconDisc $w={35} $h={35} $clear>
                  <UpgradeIcon />
                </IconDisc>
                <UpgradeText>
                  <UpgradeTitle>Upgrade plan</UpgradeTitle>
                  <UpgradeNote>More access to the best models</UpgradeNote>
                </UpgradeText>
              </Upgrade>
            </Sidebar>
            <Main>
              <ChatHeader>
                <ModelName>
                  Error Messages se Dosti Karein?
                  <Chevron width="14" height="9" viewBox="0 0 14 9" fill="none" stroke="#b4b4b4" strokeWidth="1.700" strokeLinecap="round" strokeLinejoin="round">
                    <path d="M1.200 1.500 7 7.300l5.800-5.800" />
                  </Chevron>
                </ModelName>
                <Avatar $size={40} $font={22.5}>S</Avatar>
              </ChatHeader>
              <Hero>
                <IconDisc $w={60} $h={60} $color="#b4b4b4">
                  <CubeIcon w={41} sw={2.1} />
                </IconDisc>
                <HeroTitle>Error Messages se Dosti Karein?</HeroTitle>
                <Byline>
                  By community builder
                  <svg width="13" height="14" viewBox="0 0 13 14" fill="none" stroke="#5d5d5d" strokeWidth="1.300" strokeLinecap="round">
                    <circle cx="6.500" cy="3.400" r="2.600" />
                    <path d="M1.800 12.700C2.200 9.800 3.800 8 6.500 8s4.300 1.800 4.700 4.700" />
                  </svg>
                </Byline>
                <Blurb>
                  {blurb.map(([text, track]) => (
                    <BlurbLine key={text} $track={track}>
                      {text}
                    </BlurbLine>
                  ))}
                </Blurb>
              </Hero>
              <Composer>
                <Prompt>
                  Draw a flowchart to check if a given number is composite or not.
                  <Caret />
                </Prompt>
                <ComposerActions>
                  <ClipIcon />
                  <SendButton>
                    <svg width="18" height="20" viewBox="0 0 18 20" fill="none" stroke="#fff" strokeWidth="2.500" strokeLinecap="round" strokeLinejoin="round">
                      <path d="M9 18V2M2.300 8.700 9 2l6.700 6.700" />
                    </svg>
                  </SendButton>
                </ComposerActions>
              </Composer>
              <Footer>
                <Disclaimer>ChatGPT can make mistakes. Check important info.</Disclaimer>
                <HelpButton>?</HelpButton>
              </Footer>
            </Main>
          </Page>
        </Browser>
      </Body>
    </Desktop>
  );
}
